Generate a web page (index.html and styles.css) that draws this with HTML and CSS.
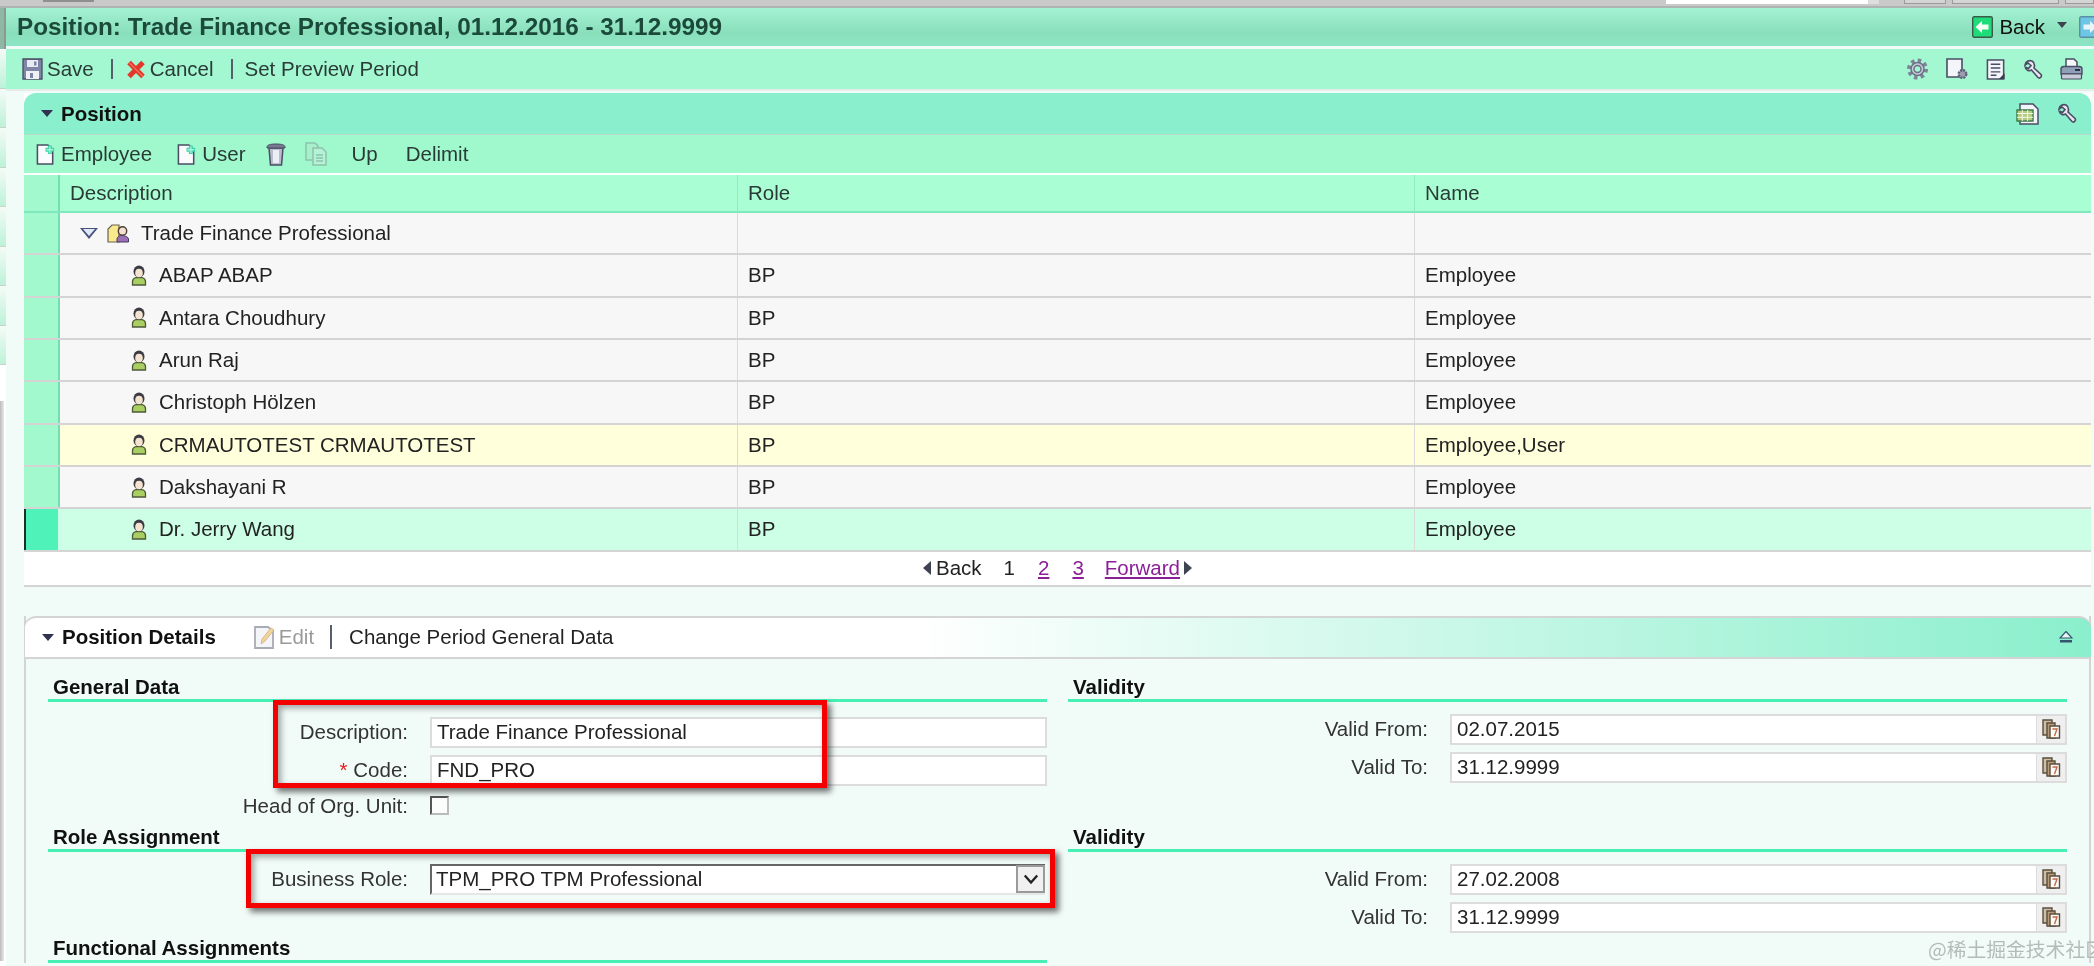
FILE: index.html
```html
<!DOCTYPE html>
<html lang="en">
<head>
<meta charset="utf-8">
<title>Position: Trade Finance Professional</title>
<link rel="stylesheet" href="styles.css">
</head>
<body>
<svg class="defs" aria-hidden="true">
  <symbol id="i-person" viewBox="0 0 16 21">
    <path d="M1.5 20v-3.5c0-2.5 2-3.5 3.5-4h6c1.500.500 3.500 1.500 3.500 4V20z" fill="#a9cf62" stroke="#4d5a3a" stroke-width="1.300"/>
    <ellipse cx="8" cy="6.500" rx="5.500" ry="6" fill="#3c3a44"/>
    <ellipse cx="8" cy="8" rx="3.800" ry="4.300" fill="#f4e4cf"/>
  </symbol>
  <symbol id="i-org" viewBox="0 0 23 19">
    <path d="M1 18V5l4-4h7v17z" fill="#f7e98c" stroke="#6a6350" stroke-width="1.200"/>
    <path d="M10 18v-3c0-2 2-3 3.500-3.500h3c1.500.500 5 1.500 5 3.500v3z" fill="#9a6fb5" stroke="#4a3a5a"/>
    <circle cx="15.500" cy="7" r="4.200" fill="#f4e0cc" stroke="#4a3f3a" stroke-width="1.400"/>
  </symbol>
  <symbol id="i-newdoc" viewBox="0 0 20 22">
    <path d="M1 1h11l5 5v15H1z" fill="#fbfbff" stroke="#4a4d63" stroke-width="1.600"/>
    <path d="M14 1.500v9M9.500 6h9" stroke="#3fd4a8" stroke-width="4"/>
    <path d="M14 2.500v7M10.500 6h7" stroke="#a6f4dc" stroke-width="1.500"/>
  </symbol>
  <symbol id="i-save" viewBox="0 0 21 22">
    <path d="M1 1h19v20H1z" fill="#7f85a6" stroke="#4a4d63" stroke-width="1.300"/>
    <path d="M5 2h11v7H5z" fill="#e9ebf4"/>
    <path d="M4 13h13v8H4z" fill="#eef0f6"/>
    <path d="M12 3.500h2.500v4H12zM8 15h3v5H8z" fill="#7f85a6"/>
  </symbol>
  <symbol id="i-x" viewBox="0 0 20 20">
    <path d="M3 3l14 14M17 3L3 17" stroke="#e2382b" stroke-width="5" fill="none"/>
    <path d="M3 3l14 14" stroke="#f26a56" stroke-width="1.500"/>
  </symbol>
  <symbol id="i-gear" viewBox="0 0 23 22">
    <circle cx="11.500" cy="11" r="8.500" fill="none" stroke="#7d8296" stroke-width="4" stroke-dasharray="3.400 3.270"/>
    <circle cx="11.500" cy="11" r="6.500" fill="#c8ccd8" stroke="#6d7186" stroke-width="1.500"/>
    <circle cx="11.500" cy="11" r="3.500" fill="#a4f5d4" stroke="#6d7186" stroke-width="1.500"/>
  </symbol>
  <symbol id="i-docgear" viewBox="0 0 23 22">
    <path d="M1 1h15v18H1z" fill="#f4f5fa" stroke="#4a4d63" stroke-width="1.600"/>
    <circle cx="16.500" cy="16" r="3.800" fill="#9a9eb0" stroke="#5d6176" stroke-width="2.400" stroke-dasharray="2 1"/>
  </symbol>
  <symbol id="i-list" viewBox="0 0 20 22">
    <path d="M1 1h17v20H1z" fill="#f4f5fa" stroke="#4a4d63" stroke-width="1.600"/>
    <path d="M4.500 5.500h10M4.500 9.500h10M4.500 13.500h10M4.500 17h6" stroke="#4a4d63" stroke-width="1.500"/>
    <path d="M19 15v6h-6z" fill="#3a3d50"/>
  </symbol>
  <symbol id="i-wrench" viewBox="0 0 20 20">
    <path d="M9 1.500C6 .5 2.500 2 2 5.500L5 3.500 8 6 5.500 9 2.200 7.500C2.500 10.500 6 12 8.500 10.500L15 18c1.500 1.500 4.500-1 3-3L11 8.500c1-3 .5-5.500-2-7z" fill="#e8e9f1" stroke="#4a4d63" stroke-width="1.600"/>
  </symbol>
  <symbol id="i-print" viewBox="0 0 23 22">
    <path d="M6 1h8l3 3v6H6z" fill="#f6f7fb" stroke="#4a4d63" stroke-width="1.500"/>
    <path d="M1 11c0-1.500 1-2.500 3-2.500h15c2 0 3 1 3 2.500v5H1z" fill="#8fa0b8" stroke="#4a4d63" stroke-width="1.400"/>
    <path d="M1.500 16h20v4c0 1-1 1-1 1H2.500s-1 0-1-1z" fill="#c9cdd9" stroke="#4a4d63" stroke-width="1.200"/>
    <path d="M15 12h5" stroke="#2c3044" stroke-width="2"/>
  </symbol>
  <symbol id="i-table" viewBox="0 0 23 22">
    <path d="M4 1h13l5 5v15H4z" fill="#f3f4f9" stroke="#4a4d63" stroke-width="1.500"/>
    <path d="M1 7h16v11H1z" fill="#b4cc82" stroke="#3f7a4a" stroke-width="1.400"/>
    <path d="M1 10.500h16M1 14.300h16M6.300 7v11M11.600 7v11" stroke="#f4f7e4" stroke-width="1"/>
  </symbol>
  <symbol id="i-trash" viewBox="0 0 20 24">
    <path d="M3 6h14l-1.500 17h-11z" fill="#b9bdcc" stroke="#4a4d63" stroke-width="1.500"/>
    <path d="M7 8v13h6V8z" fill="#eceef5"/>
    <path d="M1 5c0-2 3-3 9-3s9 1 9 3v1H1z" fill="#777b92" stroke="#4a4d63"/>
  </symbol>
  <symbol id="i-copy" viewBox="0 0 23 24">
    <path d="M2 1h9l3 3v14H2z" fill="#a6f0cb" stroke="#8fc2ae" stroke-width="1.500"/>
    <path d="M9 6h9l4 4v13H9z" fill="#b4f3d4" stroke="#8fc2ae" stroke-width="1.500"/>
    <path d="M12 13h7M12 16h7M12 19h7" stroke="#8fc2ae" stroke-width="1.300"/>
  </symbol>
  <symbol id="i-edit" viewBox="0 0 21 23">
    <path d="M1 1h13l5 4v17H1z" fill="#f4f5f8" stroke="#a9abb5" stroke-width="1.800"/>
    <path d="M7 18l1-5L17 2l3 2-9 11z" fill="#f3d59a" stroke="#d8b888"/>
  </symbol>
  <symbol id="i-cal" viewBox="0 0 19 20">
    <path d="M1 1h9v15H1z" fill="#cdbfa6" stroke="#5b4e3c" stroke-width="1.400"/>
    <path d="M5 4h8v15H5z" fill="#b89c7c" stroke="#5b4e3c" stroke-width="1.400"/>
    <path d="M8 7h9.500v12H8z" fill="#fbfaf6" stroke="#5b4e3c" stroke-width="1.400"/>
    <path d="M10.500 10h4.500l-2.500 7" fill="none" stroke="#c26a4a" stroke-width="1.400"/>
  </symbol>
</svg>

<div class="page">
  <div class="topbar">
    <span class="tab"></span>
    <span class="search"></span>
    <span class="search-btn"></span>
    <span class="top-out w-a"></span>
    <span class="top-out w-b"></span>
    <span class="top-out w-c"></span>
  </div>
  <div class="shell">
    <div class="rail">
      <div class="rail-dark"></div>
      <div class="rail-cells">
        <i></i><i></i><i></i><i></i><i></i><i></i><i></i><i></i>
      </div>
      <div class="rail-grey"></div>
    </div>
    <main class="main">
      <header class="titlebar">
        <h1 class="title">Position: Trade Finance Professional, 01.12.2016 - 31.12.9999</h1>
        <div class="nav">
          <svg class="nav-back" viewBox="0 0 21 22"><rect x=".7" y=".7" width="19.600" height="20.600" rx="1.500" fill="#1fdc79" stroke="#3b5a4b" stroke-width="1.400"/><path d="M3.500 11L10 5v3.500h6.500v5H10V17z" fill="#f3fff4"/></svg>
          <span class="nav-text">Back</span>
          <span class="caret"></span>
          <svg class="nav-next" viewBox="0 0 21 22"><rect x=".7" y=".7" width="19.600" height="20.600" rx="1.500" fill="#6cc6e4" stroke="#5a8fa6" stroke-width="1.400"/><path d="M17.500 11L11 5v3.500H4.500v5H11V17z" fill="#e8f6fb"/></svg>
        </div>
      </header>
      <div class="toolbar">
        <svg class="ic ic-21"><use href="#i-save"/></svg>
        <span class="tb-text">Save</span>
        <span class="sep sep-a"></span>
        <svg class="ic ic-20"><use href="#i-x"/></svg>
        <span class="tb-text">Cancel</span>
        <span class="sep sep-b"></span>
        <span class="tb-plain">Set Preview Period</span>
        <div class="tb-right">
          <svg class="ic ic-23"><use href="#i-gear"/></svg>
          <svg class="ic ic-23"><use href="#i-docgear"/></svg>
          <svg class="ic ic-20"><use href="#i-list"/></svg>
          <svg class="ic ic-20"><use href="#i-wrench"/></svg>
          <svg class="ic ic-23"><use href="#i-print"/></svg>
        </div>
      </div>

      <div class="content">
        <section class="panel">
          <div class="panel-head">
            <span class="tri"></span>
            <h2 class="panel-title">Position</h2>
            <div class="head-icons">
              <svg class="ic ic-23"><use href="#i-table"/></svg>
              <svg class="ic ic-20"><use href="#i-wrench"/></svg>
            </div>
          </div>
          <div class="panel-tools">
            <svg class="ic ic-20"><use href="#i-newdoc"/></svg>
            <span class="pt-label pt-emp">Employee</span>
            <svg class="ic ic-20"><use href="#i-newdoc"/></svg>
            <span class="pt-label pt-user">User</span>
            <svg class="ic ic-trash"><use href="#i-trash"/></svg>
            <svg class="ic ic-copy"><use href="#i-copy"/></svg>
            <span class="pt-up">Up</span>
            <span class="pt-del">Delimit</span>
          </div>
          <div class="table">
            <div class="row row-head">
              <div class="sel"></div>
              <div class="cell">Description</div>
              <div class="cell">Role</div>
              <div class="cell">Name</div>
            </div>
            <div class="row">
              <div class="sel"></div>
              <div class="cell tree-root"><span class="expander"></span><svg class="ic ic-org"><use href="#i-org"/></svg>Trade Finance Professional</div>
              <div class="cell"></div>
              <div class="cell"></div>
            </div>
            <div class="row">
              <div class="sel"></div>
              <div class="cell tree-leaf"><svg class="ic ic-person"><use href="#i-person"/></svg>ABAP ABAP</div>
              <div class="cell">BP</div>
              <div class="cell">Employee</div>
            </div>
            <div class="row">
              <div class="sel"></div>
              <div class="cell tree-leaf"><svg class="ic ic-person"><use href="#i-person"/></svg>Antara Choudhury</div>
              <div class="cell">BP</div>
              <div class="cell">Employee</div>
            </div>
            <div class="row">
              <div class="sel"></div>
              <div class="cell tree-leaf"><svg class="ic ic-person"><use href="#i-person"/></svg>Arun Raj</div>
              <div class="cell">BP</div>
              <div class="cell">Employee</div>
            </div>
            <div class="row">
              <div class="sel"></div>
              <div class="cell tree-leaf"><svg class="ic ic-person"><use href="#i-person"/></svg>Christoph Hölzen</div>
              <div class="cell">BP</div>
              <div class="cell">Employee</div>
            </div>
            <div class="row row-hover">
              <div class="sel"></div>
              <div class="cell tree-leaf"><svg class="ic ic-person"><use href="#i-person"/></svg>CRMAUTOTEST CRMAUTOTEST</div>
              <div class="cell">BP</div>
              <div class="cell">Employee,User</div>
            </div>
            <div class="row">
              <div class="sel"></div>
              <div class="cell tree-leaf"><svg class="ic ic-person"><use href="#i-person"/></svg>Dakshayani R</div>
              <div class="cell">BP</div>
              <div class="cell">Employee</div>
            </div>
            <div class="row row-selected">
              <div class="sel"></div>
              <div class="cell tree-leaf"><svg class="ic ic-person"><use href="#i-person"/></svg>Dr. Jerry Wang</div>
              <div class="cell">BP</div>
              <div class="cell">Employee</div>
            </div>
          </div>
          <div class="pager">
            <span class="arrow arrow-l"></span>
            <span class="pg-back">Back</span>
            <span class="pg-num">1</span>
            <a class="pg-link" href="#">2</a>
            <a class="pg-link" href="#">3</a>
            <a class="pg-link pg-fwd" href="#">Forward</a>
            <span class="arrow arrow-r"></span>
          </div>
        </section>

        <section class="details">
          <div class="details-head">
            <span class="tri"></span>
            <h2 class="panel-title">Position Details</h2>
            <svg class="ic ic-edit"><use href="#i-edit"/></svg>
            <span class="edit-text">Edit</span>
            <span class="sep sep-edit"></span>
            <span class="change">Change Period General Data</span>
            <svg class="eject" viewBox="0 0 14 12"><path d="M7 .5L13 7H1z" fill="#eaf4f4" stroke="#33566e" stroke-width="1.200"/><path d="M1 9h12v2.500H1z" fill="#33566e"/></svg>
          </div>
          <div class="form">
            <div class="sec">
              <h3 class="sec-head">General Data</h3>
              <div class="fields fields-left">
                <div class="field"><label class="lbl">Description:</label><div class="input">Trade Finance Professional</div></div>
                <div class="field"><label class="lbl"><span class="req">*</span> Code:</label><div class="input">FND_PRO</div></div>
                <div class="field field-check"><label class="lbl">Head of Org. Unit:</label><span class="check"></span></div>
              </div>
            </div>
            <div class="sec">
              <h3 class="sec-head">Validity</h3>
              <div class="fields">
                <div class="field"><label class="lbl">Valid From:</label><div class="input date">02.07.2015<span class="cal"><svg class="ic ic-cal"><use href="#i-cal"/></svg></span></div></div>
                <div class="field"><label class="lbl">Valid To:</label><div class="input date">31.12.9999<span class="cal"><svg class="ic ic-cal"><use href="#i-cal"/></svg></span></div></div>
              </div>
            </div>
            <div class="sec">
              <h3 class="sec-head">Role Assignment</h3>
              <div class="fields">
                <div class="field"><label class="lbl">Business Role:</label><div class="select">TPM_PRO TPM Professional<span class="drop"><svg viewBox="0 0 18 12" class="chev"><path d="M2 2l7 8 7-8" fill="none" stroke="#222" stroke-width="2.600"/></svg></span></div></div>
              </div>
            </div>
            <div class="sec">
              <h3 class="sec-head">Validity</h3>
              <div class="fields">
                <div class="field"><label class="lbl">Valid From:</label><div class="input date">27.02.2008<span class="cal"><svg class="ic ic-cal"><use href="#i-cal"/></svg></span></div></div>
                <div class="field"><label class="lbl">Valid To:</label><div class="input date">31.12.9999<span class="cal"><svg class="ic ic-cal"><use href="#i-cal"/></svg></span></div></div>
              </div>
            </div>
            <div class="sec">
              <h3 class="sec-head">Functional Assignments</h3>
            </div>
          </div>
        </section>
      </div>
    </main>
  </div>
  <div class="mark mark-a"></div>
  <div class="mark mark-b"></div>
  <div class="watermark">@稀土掘金技术社区</div>
</div>
</body>
</html>
```

FILE: styles.css
```css
* { box-sizing: border-box; }
html, body { margin: 0; padding: 0; background: #fff; }
body {
  width: 2094px;
  height: 966px;
  overflow: hidden;
  font-family: "Liberation Sans", Arial, sans-serif;
  font-size: 20.5px;
  color: #222;
}
.defs { position: absolute; width: 0; height: 0; }
.page {
  position: relative;
  width: 2094px;
  height: 966px;
  overflow: hidden;
  filter: blur(0.5px);
}
.ic { display: block; flex: none; }
.ic-20 { width: 20px; height: 21px; }
.ic-21 { width: 21px; height: 22px; }
.ic-23 { width: 23px; height: 22px; }

/* top strip */
.topbar {
  display: flex;
  align-items: flex-start;
  height: 8px;
  background: #c9c9c9;
  border-bottom: 2px solid #aeb4b0;
}
.tab { width: 51px; height: 2px; margin-left: 43px; background: #8f8f8f; }
.search { width: 202px; height: 4px; margin-left: auto; background: #fff; }
.search-btn { width: 11px; height: 4px; margin-right: 25px; background: #dedede; }
.top-out { height: 4px; margin-right: 6px; border: 1px solid #9a9a9a; border-top: 0; background: #d4d4d4; }
.w-a { width: 42px; }
.w-b { width: 107px; }
.w-c { width: 29px; margin-right: 0; }

/* shell */
.shell { display: flex; height: 958px; }
.rail { flex: none; width: 6px; background: #fff; }
.rail-dark { height: 41px; background: #8fb8a4; border-right: 2px solid #8a9a92; }
.rail-cells { height: 316px; }
.rail-cells i {
  display: block;
  height: 39.500px;
  background: linear-gradient(180deg, #f4fbf7, #bdf2d8);
  border-bottom: 1px solid #c5d5cc;
}
.rail-grey {
  width: 4px;
  height: 560px;
  margin-top: 36px;
  background: linear-gradient(90deg, #bbb, #e8e8e8);
}
.main { flex: 1; min-width: 0; overflow: hidden; background: #f1fbf8; }

/* title */
.titlebar {
  display: flex;
  align-items: center;
  height: 38px;
  padding-left: 11px;
  background: linear-gradient(180deg, #a4f2d4 0%, #8adfbb 65%, #8ce5c4 100%);
}
.title { margin: 0; font-size: 24.300px; font-weight: bold; color: #1b4a3b; white-space: nowrap; }
.nav { display: flex; align-items: center; margin-left: auto; margin-right: -6px; }
.nav-back { width: 21px; height: 22px; }
.nav-text { margin-left: 6px; color: #111; }
.caret {
  width: 0; height: 0; margin-left: 12px; margin-top: -4px;
  border-left: 5px solid transparent;
  border-right: 5px solid transparent;
  border-top: 6px solid #3d4350;
}
.nav-next { width: 21px; height: 22px; margin-left: 12px; }

/* toolbar */
.toolbar {
  display: flex;
  align-items: center;
  height: 40px;
  margin-top: 3px;
  padding-left: 16px;
  background: #a3f7d1;
  color: #2a3a36;
}
.tb-text { margin-left: 4px; }
.sep { flex: none; width: 2px; background: #56606a; }
.sep-a { height: 20px; margin: 0 13px 0 17px; }
.sep-b { height: 20px; margin: 0 12px 0 17px; }
.tb-right { display: flex; align-items: center; gap: 17px; margin-left: auto; margin-right: 11px; }

/* panel */
.content { padding: 2px 3px 0 18px; border-top: 2px solid #e6ece9; margin-top: 0; }
.panel { background: #fff; }
.panel-head {
  display: flex;
  align-items: center;
  height: 42px;
  padding-left: 17px;
  background: #8aefcc;
  border-top-left-radius: 12px;
  border-top-right-radius: 12px;
  border-bottom: 1px solid #b9d9cc;
}
.tri {
  flex: none;
  width: 0; height: 0;
  border-left: 6px solid transparent;
  border-right: 6px solid transparent;
  border-top: 7px solid #2f3350;
}
.panel-title { margin: 0 0 0 8px; font-size: 20.500px; font-weight: bold; color: #111; }
.head-icons { display: flex; align-items: center; gap: 18px; margin-left: auto; margin-right: 14px; }
.panel-tools {
  display: flex;
  align-items: center;
  height: 39px;
  padding-left: 12px;
  background: #9ff9cd;
  border-bottom: 1px solid #fff;
  color: #2a3a36;
}
.pt-label { margin-left: 5px; }
.pt-emp { margin-right: 25px; }
.pt-user { margin-right: 21px; }
.ic-trash { width: 20px; height: 24px; }
.ic-copy { width: 23px; height: 24px; margin-left: 18px; }
.pt-up { margin-left: 24px; }
.pt-del { margin-left: 28px; }

/* table */
.table { border-top: 1px solid #fff; }
.row {
  display: grid;
  grid-template-columns: 36px 678px 677px 1fr;
  height: 42.330px;
  background: #f7f7f7;
  border-bottom: 2px solid #d4d4d4;
}
.sel { background: #a2f9ce; border-right: 2px solid #75deb0; }
.cell {
  display: flex;
  align-items: center;
  padding-left: 10px;
  border-right: 1px solid #dadada;
  white-space: nowrap;
}
.cell:last-child { border-right: 0; }
.row-head { height: 38px; background: #a9ffd3; border-bottom: 2px solid #7fe8bd; }
.row-head .cell { border-right: 1px solid #8deec5; color: #2a3a36; }
.row-head .cell:last-child { border-right: 0; }
.row-hover { background: #ffffdc; }
.row-selected { background: #ccffe6; }
.row-selected .sel { background: #4ff2b8; border-left: 2px solid #1d2f2a; border-right-color: #ccffe6; }
.tree-root { padding-left: 20px; }
.tree-leaf { padding-left: 71px; }
.expander {
  position: relative;
  flex: none;
  width: 0; height: 0;
  border-left: 9px solid transparent;
  border-right: 9px solid transparent;
  border-top: 11px solid #49507a;
}
.expander::after {
  content: "";
  position: absolute;
  left: -6px; top: -10px;
  width: 0; height: 0;
  border-left: 6px solid transparent;
  border-right: 6px solid transparent;
  border-top: 7.500px solid #dfe9f6;
}
.ic-org { width: 23px; height: 19px; margin: 0 11px 0 9px; }
.ic-person { width: 16px; height: 21px; margin-right: 12px; }

/* pager */
.pager {
  display: flex;
  align-items: center;
  justify-content: center;
  height: 35px;
  padding-right: 0;
  background: #fff;
  border-bottom: 2px solid #d4d4d4;
}
.arrow { width: 0; height: 0; border-top: 7.500px solid transparent; border-bottom: 7.500px solid transparent; }
.arrow-l { border-right: 8px solid #3d4350; }
.arrow-r { border-left: 8px solid #3d4350; margin-left: 4px; }
.pg-back { margin-left: 5px; }
.pg-num { margin-left: 22px; }
.pg-link { margin-left: 23px; color: #8a1f96; text-decoration: underline; }
.pg-fwd { margin-left: 21px; }

/* details */
.details { margin-top: 29px; border-left: 2px solid #d4d4d4; border-right: 2px solid #d4d4d4; }
.details-head {
  display: flex;
  align-items: center;
  height: 43px;
  margin-left: -2px;
  margin-right: -2px;
  padding-left: 17px;
  background: linear-gradient(90deg, #fff 0%, #fff 43%, #8aefcc 100%);
  border-top: 2px solid #d4d4d4;
  border-bottom: 2px solid #d4d4d4;
  border-left: 1px solid #d4d4d4;
  border-top-left-radius: 12px;
  border-top-right-radius: 12px;
}
.ic-edit { width: 21px; height: 23px; margin-left: 38px; }
.edit-text { margin-left: 4px; color: #9a9a9a; }
.sep-edit { height: 24px; margin: 0 17px 0 16px; }
.eject { width: 14px; height: 12px; margin-left: auto; margin-right: 18px; }

/* form */
.form {
  display: grid;
  grid-template-columns: 1fr 1fr;
  grid-template-rows: 150px 111px auto;
  column-gap: 21px;
  padding: 15px 22px 0 22px;
}
.sec-head {
  height: 28px;
  margin: 0;
  padding-left: 5px;
  font-size: 20.500px;
  line-height: 25px;
  font-weight: bold;
  color: #111;
  border-bottom: 3px solid #48efb4;
}
.fields { display: flex; flex-direction: column; gap: 7px; padding-top: 12px; }
.fields-left { padding-top: 15px; }
.field { display: flex; align-items: center; height: 31px; }
.field-check { height: 20px; margin-top: 3px; }
.lbl { flex: none; width: 360px; margin-right: 22px; text-align: right; color: #333; white-space: nowrap; }
.req { color: #e02020; }
.input {
  display: flex;
  align-items: center;
  flex: 1;
  height: 31px;
  padding-left: 5px;
  background: #fff;
  border: 2px solid #dcdcdc;
  color: #222;
}
.date { padding-right: 0; }
.cal {
  display: flex;
  align-items: center;
  justify-content: center;
  width: 29px;
  height: 27px;
  margin-left: auto;
  background: #efefef;
  border-left: 1px solid #dcdcdc;
}
.ic-cal { width: 19px; height: 20px; }
.check { width: 19px; height: 19px; background: #fbfcfc; border: 2px solid #555; border-right-color: #bbb; border-bottom-color: #bbb; }
.select {
  display: flex;
  align-items: center;
  flex: 1;
  height: 31px;
  margin-right: 2px;
  padding-left: 4px;
  background: #fff;
  border-top: 2px solid #666;
  border-left: 2px solid #666;
  border-bottom: 2px solid #e6e6e6;
}
.drop {
  display: flex;
  align-items: center;
  justify-content: center;
  width: 29px;
  height: 28px;
  margin-left: auto;
  background: #f0f0f0;
  border: 2px solid #9a9a9a;
}
.chev { width: 16px; height: 12px; }

/* annotation overlays */
.mark {
  position: absolute;
  border: 5px solid #f50000;
  box-shadow: 4px 4px 6px rgba(0, 0, 0, 0.55), inset 3px 3px 6px rgba(0, 0, 0, 0.35);
}
.mark-a { left: 273px; top: 700px; width: 554px; height: 88px; }
.mark-b { left: 246px; top: 849px; width: 809px; height: 59px; }
.watermark {
  position: absolute;
  left: 1928px;
  top: 937px;
  font-family: "Noto Sans CJK SC", "Liberation Sans", sans-serif;
  font-size: 19.800px;
  line-height: 24px;
  color: #b5bbb9;
  white-space: nowrap;
}
```
